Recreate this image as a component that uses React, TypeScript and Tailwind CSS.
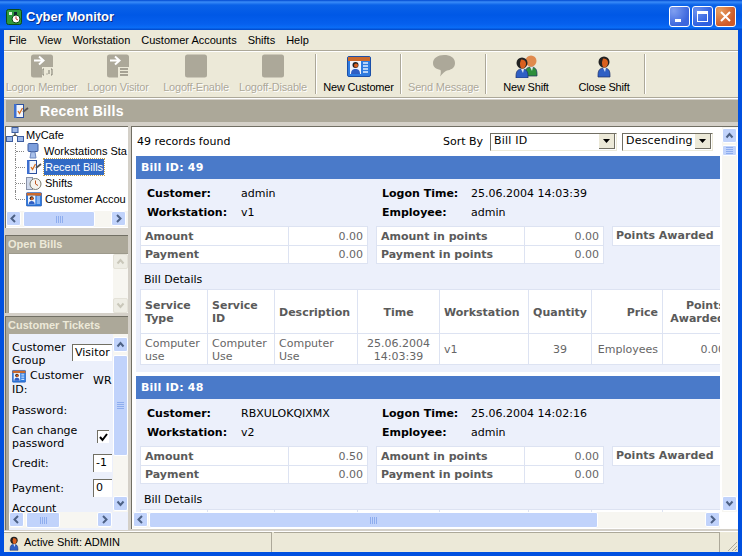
import React from "react";

const verdana = "font-['DejaVu_Sans',Verdana,sans-serif] text-[11px]";
const tahoma = "font-['Liberation_Sans',Tahoma,sans-serif] text-[11px]";

function Person({ x = 0, y = 0, body = "#2f5fc4", face = "#d9601f", hair = "#222" }: { x?: number; y?: number; body?: string; face?: string; hair?: string }) {
  return (
    <g transform={`translate(${x} ${y})`}>
      <path d="M2 20c0-5 2-7 6-7s6 2 6 7v2H2z" fill={body} stroke="#1c2f66" strokeWidth="0.7" />
      <path d="M7 13h3l-1 4z" fill="#dfe8f5" />
      <circle cx="8" cy="7" r="5.5" fill={hair} />
      <path d="M7 3.5c3 0 5 1.5 5 4s-1.5 5-3.5 5S6 10 6 7z" fill={face} />
    </g>
  );
}

function CustomerCard({ size = 24 }: { size?: number }) {
  return (
    <svg width={size} height={size} viewBox="0 0 24 24">
      <rect x="0.5" y="2.5" width="23" height="20" rx="1.5" fill="#2f7be0" stroke="#1b4fa8" />
      <rect x="1" y="3" width="22" height="4" fill="#cb6a2c" />
      <rect x="3" y="7" width="11" height="13" fill="#f2f5fb" />
      <circle cx="8.5" cy="11" r="3" fill="#222" />
      <circle cx="9" cy="11.5" r="2" fill="#d9601f" />
      <path d="M4 20c0-4 2-5 4.500-5s4.500 1 4.500 5z" fill="#2f5fc4" />
      <path d="M16 9h5M16 12h5M16 15h5M16 18h5" stroke="#e4efff" strokeWidth="1.500" />
    </svg>
  );
}

function Bills({ size = 16 }: { size?: number }) {
  return (
    <svg width={size} height={size} viewBox="0 0 16 16">
      <rect x="1.500" y="1.500" width="9" height="13" fill="#f2f5fb" stroke="#2a4f9e" />
      <rect x="1" y="1" width="2.500" height="14" fill="#3d6fd0" />
      <path d="M5 8l1.500 2.500L9.500 5" fill="none" stroke="#d9701f" strokeWidth="1.300" />
      <path d="M10 9l5-4" stroke="#555" strokeWidth="1.800" />
    </svg>
  );
}

function DisabledIcon({ kind }: { kind: "member" | "visitor" | "blank" | "bubble" }) {
  if (kind === "bubble")
    return (
      <svg width="24" height="24" viewBox="0 0 24 24">
        <path d="M12 1c6 0 11 2.500 11 8s-5 7-8 7.500c-2 .5-4 3-7 6 1-3 1-5 .5-6.500C4 15 1 13 1 9c0-5 5-8 11-8z" fill="#aca899" />
      </svg>
    );
  return (
    <svg width="24" height="24" viewBox="0 0 24 24">
      <rect x="1" y="0.500" width="22" height="23" rx="2.500" fill="#aca899" />
      {kind !== "blank" && <path d="M4 6.500h8M9 2.500l4.500 4-4.500 4" fill="none" stroke="#fff" strokeWidth="2" />}
      {kind === "member" && (
        <g>
          <path d="M12 13h11v11H12z" fill="#ece9d8" />
          <path d="M14 15h-1v6h1M21 15h1v6h-1M16.500 20h1M19 16v4" stroke="#7f7c70" strokeWidth="1" fill="none" />
        </g>
      )}
      {kind === "visitor" && (
        <g>
          <path d="M12 13h11v11H12z" fill="#ece9d8" />
          <path d="M14 15h8M14 18h8M14 21h8" stroke="#8e8b7e" strokeWidth="1.500" />
        </g>
      )}
    </svg>
  );
}

function ToolButton({ w, label, disabled, icon }: { w: string; label: string; disabled?: boolean; icon: React.ReactNode }) {
  return (
    <div className={`${w} h-full flex flex-col items-center shrink-0`}>
      <div className="h-[24px] mt-[2px] flex items-center justify-center">{icon}</div>
      <div className={`mt-[1px] whitespace-nowrap leading-[16px] tracking-[-0.2px] ${disabled ? "text-[#aca899] [text-shadow:1px_1px_0_#fff]" : "text-black"}`}>{label}</div>
    </div>
  );
}

const Sep = () => <div className="w-[2px] h-[40px] mt-[2px] shrink-0 bg-[#aca899] border-r border-white box-border" />;

function Chevron({ dir, color = "#4d6185" }: { dir: "up" | "down" | "left" | "right"; color?: string }) {
  const d = {
    up: "M2.500 7.500 L5.500 4 L8.500 7.500",
    down: "M2.500 3.500 L5.500 7 L8.500 3.500",
    left: "M7 2 L3.500 5.500 L7 9",
    right: "M4 2 L7.500 5.500 L4 9",
  }[dir];
  return (
    <svg width="11" height="11" viewBox="0 0 11 11">
      <path d={d} fill="none" stroke={color} strokeWidth="2" />
    </svg>
  );
}

function SbBtn({ dir, disabled }: { dir: "up" | "down" | "left" | "right"; disabled?: boolean }) {
  return (
    <div className={`w-[15px] h-[15px] shrink-0 flex items-center justify-center rounded-[2px] border ${disabled ? "bg-[#eeede5] border-[#e4e2d8]" : "bg-[#c1d3fb] border-white"}`}>
      <Chevron dir={dir} color={disabled ? "#c9c7ba" : "#4d6185"} />
    </div>
  );
}

function VGrip() {
  return (
    <div className="flex flex-col gap-[1px] w-[7px]">
      <div className="h-px bg-[#8eadee]" />
      <div className="h-px bg-[#8eadee]" />
      <div className="h-px bg-[#8eadee]" />
      <div className="h-px bg-[#8eadee]" />
    </div>
  );
}
function HGrip() {
  return (
    <div className="flex gap-[1px] h-[7px]">
      <div className="w-px bg-[#8eadee]" />
      <div className="w-px bg-[#8eadee]" />
      <div className="w-px bg-[#8eadee]" />
      <div className="w-px bg-[#8eadee]" />
    </div>
  );
}

function HScroll({ before, thumb, w }: { before: number; thumb: number; w: string }) {
  return (
    <div className={`${w} h-[16px] shrink-0 flex bg-[#f7f6f1]`}>
      <SbBtn dir="left" />
      <div className="flex-1 flex min-w-0">
        <div style={{ width: before }} className="shrink-0" />
        <div style={{ width: thumb }} className="shrink-0 h-[16px] bg-[#c1d3fb] border border-white rounded-[2px] flex items-center justify-center">
          <HGrip />
        </div>
      </div>
      <SbBtn dir="right" />
    </div>
  );
}

function Cell({ children, right, center, bold, className = "" }: { children?: React.ReactNode; right?: boolean; center?: boolean; bold?: boolean; className?: string }) {
  return (
    <div className={`bg-white flex items-center px-[4px] leading-[13px] overflow-hidden ${right ? "justify-end text-right" : center ? "justify-center text-center" : ""} ${bold ? "font-bold text-[#5a5a5a]" : "text-[#666]"} ${className}`}>
      <span className="shrink-0 max-w-full">{children}</span>
    </div>
  );
}

function SummaryTable({ a, b, c }: { a: string; b: string; c: string[] }) {
  return (
    <div className="w-[228px] shrink-0 grid grid-cols-[147px_78px] grid-rows-[18px_17px] gap-[1px] bg-[#dde3f2] border border-[#dde3f2] h-[38px] box-border">
      <Cell bold className="pt-px">{a}</Cell>
      <Cell right className="pt-px">{c[0]}</Cell>
      <Cell bold>{b}</Cell>
      <Cell right>{c[1]}</Cell>
    </div>
  );
}

function Bill({ id, customer, workstation, time, amount, qty }: { id: number; customer: string; workstation: string; time: string; amount: string; qty: string }) {
  return (
    <div className="w-[584px] h-[216px] shrink-0 bg-[#ecf0fb] overflow-hidden">
      <div className="h-[23px] bg-[#4a7ac9] text-white font-bold flex items-center pl-[5px] pt-[1px] tracking-[0.2px]">Bill ID: {id}</div>
      <div className="h-[47px] pl-[11px] pt-[6px]">
        <div className="flex h-[19px] items-center">
          <div className="w-[94px] font-bold text-black">Customer:</div>
          <div className="w-[141px] text-black">{customer}</div>
          <div className="w-[89px] font-bold text-black">Logon Time:</div>
          <div className="text-black">{time}</div>
        </div>
        <div className="flex h-[19px] items-center">
          <div className="w-[94px] font-bold text-black">Workstation:</div>
          <div className="w-[141px] text-black">{workstation}</div>
          <div className="w-[89px] font-bold text-black">Employee:</div>
          <div className="text-black">admin</div>
        </div>
      </div>
      <div className="flex pl-[4px] gap-[8px] h-[38px]">
        <SummaryTable a="Amount" b="Payment" c={[amount, "0.00"]} />
        <SummaryTable a="Amount in points" b="Payment in points" c={["0.00", "0.00"]} />
        <div className="w-[110px] shrink-0 h-[20px] bg-white border border-[#dde3f2] flex items-center pl-[3px] pt-[1px] font-bold text-[#5a5a5a] whitespace-nowrap">Points Awarded</div>
      </div>
      <div className="h-[25px] pl-[8px] flex items-end pb-[1px] text-black">Bill Details</div>
      <div className="ml-[4px] w-[640px] grid grid-cols-[66px_66px_82px_81px_88px_62px_70px_80px] grid-rows-[43px_30px] gap-[1px] bg-[#dde3f2] border-y border-l border-[#dde3f2]">
        <Cell bold>Service Type</Cell>
        <Cell bold>Service ID</Cell>
        <Cell bold className="pt-px">Description</Cell>
        <Cell bold center className="pt-px">Time</Cell>
        <Cell bold className="pt-px">Workstation</Cell>
        <Cell bold center className="pt-px">Quantity</Cell>
        <Cell bold right className="pt-px">Price</Cell>
        <Cell bold right className="pr-[18px]">Points Awarded</Cell>
        <Cell className="pt-px">Computer use</Cell>
        <Cell className="pt-px">Computer Use</Cell>
        <Cell className="pt-px">Computer Use</Cell>
        <Cell center className="pt-px">25.06.2004 14:03:39</Cell>
        <Cell>v1</Cell>
        <Cell center>{qty}</Cell>
        <Cell right>Employees</Cell>
        <Cell right className="pr-[18px]">0.00</Cell>
      </div>
    </div>
  );
}

function Select({ w, value }: { w: string; value: string }) {
  return (
    <div className={`${w} h-[18px] mt-[-2px] shrink-0 bg-white border-t border-l border-[#716f64] border-r border-b border-r-[#ece9d8] border-b-[#ece9d8] flex items-center pl-[3px] text-black`}>
      <span className="flex-1 truncate tracking-[0.2px]">{value}</span>
      <div className="w-[16px] h-[15px] mr-px bg-[#ece9d8] border-r border-b border-[#716f64] flex items-center justify-center">
        <svg width="7" height="4" viewBox="0 0 7 4"><path d="M0 0h7L3.500 4z" fill="#000" /></svg>
      </div>
    </div>
  );
}

function TreeRow({ icon, label, selected, last }: { icon: React.ReactNode; label: string; selected?: boolean; last?: boolean }) {
  return (
    <div className="h-[16px] flex items-center ml-[9px] whitespace-nowrap">
      <div className={`w-px self-start border-l border-dotted border-[#888] ${last ? "h-[8px]" : "h-[16px]"}`} />
      <div className="w-[9px] border-t border-dotted border-[#888] mr-[1px]" />
      <div className="w-[16px] h-[16px] shrink-0 mr-[2px]">{icon}</div>
      <span className={selected ? "bg-[#316ac5] text-white outline-1 outline-dotted outline-[#c9a24a] px-[1px]" : "text-black px-[1px]"}>{label}</span>
    </div>
  );
}

function FormRow({ h, label, children }: { h: string; label: React.ReactNode; children?: React.ReactNode }) {
  return (
    <div className={`${h} flex items-center shrink-0`}>
      <div className="flex-1 leading-[13px] text-black min-w-0">{label}</div>
      {children}
    </div>
  );
}

const InputBox = ({ v }: { v: string }) => (
  <div className="w-[19px] h-[18px] bg-white border-l border-t border-[#716f64] text-black flex items-center pl-[2px] shrink-0">{v}</div>
);

export default function App() {
  return (
    <div className="w-[742px] h-[556px] overflow-hidden bg-[#0050e0] flex flex-col select-none">
      <div className="h-[30px] shrink-0 flex items-center pt-[3px] pl-[6px] pr-[6px] bg-[linear-gradient(180deg,#0048d0_0,#3a8cf8_2px,#0a62e8_5px,#0058e6_50%,#0660ee_80%,#0a6cf6_92%,#0048c8_100%)]">
        <svg width="16" height="16" viewBox="0 0 16 16" className="shrink-0">
          <rect x="0.500" y="0.500" width="15" height="15" rx="2" fill="#2e9a3a" stroke="#0d4a16" />
          <rect x="3" y="3" width="3" height="3" fill="#dff5df" />
          <rect x="8" y="3" width="3" height="3" fill="#123" />
          <circle cx="10" cy="10" r="4" fill="#fff" stroke="#0d4a16" />
          <path d="M10 7.500V10l2 1" stroke="#c33" fill="none" />
        </svg>
        <div className="ml-[4px] text-white font-bold text-[13px] font-['Liberation_Sans',sans-serif] [text-shadow:1px_1px_0_#0a2a80] flex-1">Cyber Monitor</div>
        <div className="flex gap-[2px]">
          <div className="w-[21px] h-[21px] rounded-[3px] border border-white bg-[radial-gradient(circle_at_20%_20%,#7f9ff0,#3c66dd_70%)] flex items-end pl-[5px] pb-[4px]">
            <div className="w-[6px] h-[3px] bg-white" />
          </div>
          <div className="w-[21px] h-[21px] rounded-[3px] border border-white bg-[radial-gradient(circle_at_20%_20%,#6a90ee,#2f5fe0_70%)] flex items-center justify-center">
            <div className="w-[11px] h-[11px] border border-white border-t-[3px]" />
          </div>
          <div className="w-[21px] h-[21px] rounded-[3px] border border-white bg-[radial-gradient(circle_at_20%_20%,#e8a060,#cf5a28_70%)] flex items-center justify-center">
            <svg width="13" height="13" viewBox="0 0 13 13"><path d="M2 2l9 9M11 2l-9 9" stroke="#fff" strokeWidth="2" /></svg>
          </div>
        </div>
      </div>

      <div className="flex-1 flex flex-col mx-[4px] mb-[4px] bg-[#d4d0c8] min-h-0">
        <div className={`h-[20px] shrink-0 bg-[#ece9d8] flex items-center pl-[5px] gap-[11px] text-black ${tahoma}`}>
          <span>File</span><span>View</span><span>Workstation</span><span>Customer Accounts</span><span>Shifts</span><span>Help</span>
        </div>
        <div className="h-[2px] shrink-0 bg-[#aca899] border-b border-white" />
        <div className={`h-[45px] shrink-0 bg-[#ece9d8] flex pl-0 ${tahoma}`}>
          <ToolButton w="w-[75px]" label="Logon Member" disabled icon={<DisabledIcon kind="member" />} />
          <ToolButton w="w-[78px]" label="Logon Visitor" disabled icon={<DisabledIcon kind="visitor" />} />
          <ToolButton w="w-[78px]" label="Logoff-Enable" disabled icon={<DisabledIcon kind="blank" />} />
          <ToolButton w="w-[76px]" label="Logoff-Disable" disabled icon={<DisabledIcon kind="blank" />} />
          <div className="w-[4px] shrink-0" />
          <Sep />
          <ToolButton w="w-[83px]" label="New Customer" icon={<CustomerCard />} />
          <Sep />
          <ToolButton w="w-[83px]" label="Send Message" disabled icon={<DisabledIcon kind="bubble" />} />
          <Sep />
          <ToolButton w="w-[78px]" label="New Shift" icon={
            <svg width="24" height="24" viewBox="0 0 24 24">
              <Person x={9} y={0} body="#2e8f3c" face="#e08a4e" hair="#e08a4e" />
              <Person x={0} y={2} />
            </svg>
          } />
          <ToolButton w="w-[78px]" label="Close Shift" icon={
            <svg width="24" height="24" viewBox="0 0 24 24"><Person x={4} y={1} /></svg>
          } />
          <div className="w-[1px] shrink-0" />
          <Sep />
        </div>
        <div className="h-[2px] shrink-0 bg-[#aca899] border-b border-white" />
        <div className="h-[1px] shrink-0" />
        <div className="h-[22px] shrink-0 ml-[2px] bg-[#aca899] flex items-center pl-[7px]">
          <Bills />
          <span className="ml-[11px] text-white font-bold text-[14px] tracking-[0.3px] font-['Liberation_Sans',sans-serif]">Recent Bills</span>
        </div>

        <div className={`h-[407px] shrink-0 pt-[4px] flex ${verdana}`}>
          {/* left column */}
          <div className="w-[123px] shrink-0 ml-[1px] flex flex-col">
            <div className="h-[102px] shrink-0 bg-white border-t border-l border-[#716f64] flex flex-col overflow-hidden">
              <div className={`flex-1 overflow-hidden ${tahoma}`}>
                <div className="h-[16px] flex items-center whitespace-nowrap">
                  <svg width="18" height="16" viewBox="0 0 18 16" className="shrink-0 mr-[2px]">
                    <path d="M9 4v5M3 11l6-3 6 3" stroke="#333" fill="none" />
                    <rect x="6" y="0.500" width="6" height="5" fill="#9db8e8" stroke="#3d5da0" />
                    <rect x="0.500" y="9.500" width="6" height="5" fill="#9db8e8" stroke="#3d5da0" />
                    <rect x="11.500" y="9.500" width="6" height="5" fill="#9db8e8" stroke="#3d5da0" />
                  </svg>
                  <span className="text-black">MyCafe</span>
                </div>
                <TreeRow label="Workstations Sta" icon={
                  <svg width="16" height="16" viewBox="0 0 16 16"><rect x="3" y="0.500" width="10" height="8" rx="1" fill="#7d9fdc" stroke="#3d5da0" /><path d="M6 9h4l1 6H5z" fill="#a8c0ea" stroke="#6d88c0" /></svg>
                } />
                <TreeRow selected label="Recent Bills" icon={<Bills />} />
                <TreeRow label="Shifts" icon={
                  <svg width="16" height="16" viewBox="0 0 16 16"><rect x="0.500" y="2.500" width="6" height="12" fill="#cfd8ea" stroke="#8892a8" /><circle cx="9.500" cy="9" r="5.500" fill="#f4f4ee" stroke="#7b7b70" /><path d="M9.500 5.500V9l2.500 1.500" stroke="#c0551f" fill="none" /></svg>
                } />
                <TreeRow last label="Customer Accou" icon={<CustomerCard size={16} />} />
              </div>
              <div className="mb-[1px] flex bg-[#f7f6f1]"><HScroll w="w-[120px]" before={2} thumb={72} /></div>
            </div>
            <div className="h-[7px] shrink-0" />
            <div className="h-[78px] shrink-0 bg-[#aca899] border-t border-l border-[#716f64] pl-[2px] flex flex-col">
              <div className={`h-[17px] text-[#ece9d8] font-bold flex items-center ${tahoma}`}>Open Bills</div>
              <div className="flex-1 bg-white flex border-l border-t border-[#9d9a8c]">
                <div className="flex-1" />
                <div className="w-[15px] bg-[#f7f6f1] flex flex-col justify-between">
                  <SbBtn dir="up" disabled />
                  <SbBtn dir="down" disabled />
                </div>
              </div>
            </div>
            <div className="h-[3px] shrink-0" />
            <div className="h-[214px] shrink-0 bg-[#aca899] border-t border-l border-[#716f64] pl-[2px] flex flex-col">
              <div className={`h-[17px] shrink-0 text-[#ece9d8] font-bold flex items-center whitespace-nowrap ${tahoma}`}>Customer Tickets</div>
              <div className="flex-1 bg-[#ecf0fb] flex flex-col ml-[1px] overflow-hidden min-h-0">
                <div className="flex-1 flex min-h-0">
                  <div className="w-[103px] shrink-0 pl-[3px] pr-0 overflow-hidden flex flex-col">
                    <FormRow h="h-[26px] mt-[7px]" label={<span>Customer<br />Group</span>}>
                      <div className="w-[40px] h-[17px] mt-[-3px] bg-white border-l border-t border-[#716f64] text-black pl-[2px] overflow-hidden shrink-0">Visitor</div>
                    </FormRow>
                    <div className="h-[33px] mt-[-2px] shrink-0 flex items-start pt-[4px]">
                      <div className="flex-1 leading-[14px] text-black">
                        <span className="inline-flex align-top mr-[4px]"><CustomerCard size={14} /></span>Customer<br />ID:
                      </div>
                      <div className="w-[19px] pt-[4px] text-black overflow-hidden">WR</div>
                    </div>
                    <FormRow h="h-[24px]" label="Password:" />
                    <FormRow h="h-[29px]" label={<span>Can change<br />password</span>}>
                      <div className="w-[12px] h-[13px] mr-[3px] bg-white border-l border-t border-[#716f64] flex items-center justify-center shrink-0">
                        <svg width="9" height="9" viewBox="0 0 9 9"><path d="M1 4l2.500 3L8 1" fill="none" stroke="#000" strokeWidth="2" /></svg>
                      </div>
                    </FormRow>
                    <FormRow h="h-[24px]" label="Credit:"><InputBox v="-1" /></FormRow>
                    <FormRow h="h-[26px]" label="Payment:"><InputBox v="0" /></FormRow>
                    <FormRow h="h-[14px]" label="Account" />
                  </div>
                  <div className="flex-1 min-w-0" />
                  <div className="w-[15px] shrink-0 bg-[#f7f6f1] flex flex-col pt-[3px] pb-[1px]">
                    <SbBtn dir="up" />
                    <div className="h-[101px] mt-[3px] shrink-0 bg-[#c1d3fb] border border-white rounded-[2px] flex items-center justify-center"><VGrip /></div>
                    <div className="flex-1" />
                    <SbBtn dir="down" />
                  </div>
                </div>
                <div className="h-[16px] shrink-0 flex">
                  <HScroll w="w-[103px]" before={2} thumb={34} />
                </div>
                <div className="h-[2px] shrink-0" />
              </div>
            </div>
          </div>

          <div className="w-[3px] shrink-0" />

          {/* main */}
          <div className="w-[607px] shrink-0 h-[403px] bg-white border-t border-l border-[#716f64] flex flex-col overflow-hidden">
            <div className="flex-1 flex min-h-0">
              <div className="w-[590px] shrink-0 overflow-hidden flex flex-col pl-[4px]">
                <div className="h-[29px] shrink-0 flex items-center pl-[1px] pt-[2px] text-black">
                  <span className="w-[306px]">49 records found</span>
                  <span className="w-[47px]">Sort By</span>
                  <Select w="w-[127px]" value="Bill ID" />
                  <div className="w-[5px]" />
                  <Select w="w-[91px]" value="Descending" />
                </div>
                <div className="w-[584px] flex flex-col gap-[4px]">
                  <Bill id={49} customer="admin" workstation="v1" time="25.06.2004 14:03:39" amount="0.00" qty="39" />
                  <Bill id={48} customer="RBXULOKQIXMX" workstation="v2" time="25.06.2004 14:02:16" amount="0.50" qty="1" />
                </div>
              </div>
              <div className="w-[15px] shrink-0 bg-[#f7f6f1] flex flex-col pt-[1px] pb-[1px]">
                <SbBtn dir="up" />
                <div className="mt-[2px] h-[11px] shrink-0 bg-[#c1d3fb] border border-white rounded-[2px] flex items-center justify-center"><VGrip /></div>
                <div className="flex-1" />
                <SbBtn dir="down" />
              </div>
            </div>
            <div className="h-[16px] shrink-0 flex mb-[1px] pl-[1px]">
              <HScroll w="w-[587px]" before={1} thumb={449} />
            </div>
          </div>
        </div>

        <div className="h-[2px] shrink-0" />
        <div className={`flex-1 bg-[#ece9d8] flex border-t border-white text-black ${tahoma}`}>
          <div className="w-[268px] shrink-0 flex items-center border-t border-r border-[#aca899] pl-[2px]">
            <svg width="16" height="18" viewBox="0 0 24 24"><Person x={4} y={1} /></svg>
            <span className="ml-[2px]">Active Shift: ADMIN</span>
          </div>
          <div className="w-[2px] shrink-0" />
          <div className="flex-1 border-t border-r border-[#aca899]" />
          <div className="w-[18px] shrink-0 flex items-end justify-end">
            <svg width="12" height="12" viewBox="0 0 12 12"><path d="M11 2L2 11M11 6l-5 5M11 9l-2 2" stroke="#aca899" /></svg>
          </div>
        </div>
      </div>
    </div>
  );
}
